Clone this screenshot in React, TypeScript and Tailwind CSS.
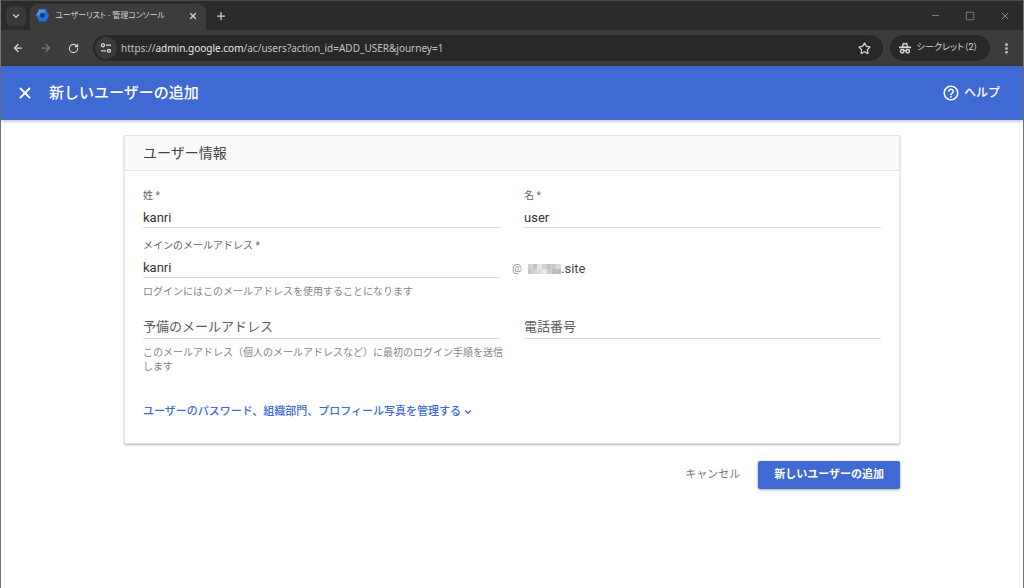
import { useState } from 'react';
import type { ComponentProps } from 'react';
import { ArrowLeft, ArrowRight, ChevronDown, Minus, MoreVertical, Plus, RotateCw, Square, Star, X } from 'lucide-react';

function Favicon() {
  return (
    <svg viewBox="0 0 24 24" className="w-[13px] h-[13px] shrink-0" aria-hidden="true">
      <path d="M6 1h12l6 11-6 11H6L0 12z" fill="#1f6fe5" />
      <path d="M6 1h12l-3 6H9L6 12H0z" fill="#4c94f5" />
      <circle cx="12" cy="12" r="4.500" fill="#2e3440" />
    </svg>
  );
}

function TuneIcon() {
  return (
    <svg viewBox="0 0 12 12" className="w-3 h-3" fill="none" stroke="currentColor" strokeWidth="1.3" aria-hidden="true">
      <circle cx="3" cy="3.2" r="1.5" />
      <path d="M6 3.2h5M1 8.8h5" />
      <circle cx="9" cy="8.8" r="1.5" />
    </svg>
  );
}

function IncognitoIcon() {
  return (
    <svg viewBox="0 0 24 24" className="w-3 h-3" aria-hidden="true">
      <path d="M5.500 9L7.500 2.500Q8 1 9.500 1.500L12 2.300L14.500 1.500Q16 1 16.500 2.500L18.500 9H24V12.500H0V9Z" fill="currentColor" />
      <path d="M9.500 5h5l1 3.500h-7z" fill="#282828" />
      <circle cx="6.500" cy="18.500" r="3.400" fill="none" stroke="currentColor" strokeWidth="3" />
      <circle cx="17.500" cy="18.500" r="3.400" fill="none" stroke="currentColor" strokeWidth="3" />
      <path d="M10 17.500q2-1.500 4 0" fill="none" stroke="currentColor" strokeWidth="2.500" />
    </svg>
  );
}

function HelpIcon() {
  return (
    <svg viewBox="0 0 24 24" className="w-[18px] h-[18px]" fill="currentColor" aria-hidden="true">
      <path d="M11 18h2v-2h-2v2zm1-16C6.480 2 2 6.480 2 12s4.480 10 10 10 10-4.480 10-10S17.520 2 12 2zm0 18c-4.410 0-8-3.590-8-8s3.590-8 8-8 8 3.590 8 8-3.590 8-8 8zm0-14c-2.210 0-4 1.790-4 4h2c0-1.100.9-2 2-2s2 .9 2 2c0 2-3 1.750-3 5h2c0-2.250 3-2.500 3-5 0-2.210-1.790-4-4-4z" />
    </svg>
  );
}

function MaskedDomain() {
  const cells = ['#d2d2d2', '#c4c4c4', '#e6e6e6', '#cfcfcf', '#c4c4c4', '#c9c9c9', '#dadada', '#c6c6c6', '#d0d0d0', '#dddddd', '#e8e8e8', '#cccccc', '#bcbcbc', '#b8b8b8'];
  return (
    <svg viewBox="0 0 35 10" preserveAspectRatio="none" className="w-[33px] h-[10px]" aria-hidden="true">
      {cells.map((fill, i) => (
        <rect key={i} x={(i % 7) * 5} y={i < 7 ? 0 : 5} width="5" height="5" fill={fill} />
      ))}
    </svg>
  );
}

function BrowserChrome() {
  return (
    <div className="bg-[#3c3c3c] text-[#d6d6d6] border-t border-[#4a4a4a]">
      <div className="h-[29px] flex items-stretch bg-[#2b2b2b]">
        <div className="flex items-center pl-[5px] pr-1 shrink-0">
          <button aria-label="タブを検索" className="w-5 h-5 rounded-md bg-[#3a3a3a] flex items-center justify-center">
            <ChevronDown className="w-[10px] h-[10px]" strokeWidth={3} />
          </button>
        </div>
        <div className="w-[176px] mt-[3px] pb-[3px] pl-[6px] pr-2 rounded-t-lg bg-[#3c3c3c] flex items-center gap-[6px]">
          <Favicon />
          <span className="grow whitespace-nowrap text-[8px] [font-feature-settings:'palt']">ユーザーリスト - 管理コンソール</span>
          <button aria-label="タブを閉じる" className="flex">
            <X className="w-[10px] h-[10px]" strokeWidth={3} />
          </button>
        </div>
        <button aria-label="新しいタブ" className="px-[9px]">
          <Plus className="w-3 h-3" strokeWidth={2.500} />
        </button>
        <div className="ml-auto flex items-center gap-6 pr-3 text-[#8a8a8a]">
          <button aria-label="最小化"><Minus className="w-[11px] h-[11px]" strokeWidth={2} /></button>
          <button aria-label="最大化"><Square className="w-[10px] h-[10px]" strokeWidth={2} /></button>
          <button aria-label="閉じる"><X className="w-3 h-3" strokeWidth={2} /></button>
        </div>
      </div>
      <div className="h-9 flex items-center">
        <div className="flex items-center gap-4 pl-[11px] pr-[14px]">
          <button aria-label="戻る"><ArrowLeft className="w-3 h-3" strokeWidth={2.500} /></button>
          <button aria-label="進む" className="text-[#7a7a7a]"><ArrowRight className="w-3 h-3" strokeWidth={2.500} /></button>
          <button aria-label="再読み込み"><RotateCw className="w-[11px] h-[11px]" strokeWidth={2.500} /></button>
        </div>
        <div className="grow h-[26px] rounded-full bg-[#282828] flex items-center pl-[2px] pr-3">
          <button aria-label="サイト情報" className="w-[22px] h-[22px] rounded-full bg-[#3a3a3a] flex items-center justify-center">
            <TuneIcon />
          </button>
          <div className="grow pl-1 text-[10px] font-['Noto_Sans','Open_Sans',sans-serif] text-[#c4c4c4]">
            https://<span className="text-[#ececec]">admin.google.com</span>/ac/users?action_id=ADD_USER&amp;journey=1
          </div>
          <button aria-label="ブックマーク"><Star className="w-[13px] h-[13px]" strokeWidth={2.200} /></button>
        </div>
        <button className="h-[26px] ml-[7px] pl-[9px] pr-3 rounded-full bg-[#282828] flex items-center gap-[6px] text-[9px] whitespace-nowrap">
          <IncognitoIcon />
          <span className="[font-feature-settings:'palt']">シークレット（2）</span>
        </button>
        <button aria-label="メニュー" className="px-[10px]"><MoreVertical className="w-[13px] h-[13px]" strokeWidth={3} /></button>
      </div>
    </div>
  );
}

type FieldProps = ComponentProps<'input'> & { id: string; label: string };

function Field({ id, label, ...rest }: FieldProps) {
  return (
    <div>
      <label htmlFor={id} className="block text-[10px] leading-[14px] text-[#666]">{label} *</label>
      <input
        id={id}
        className="block w-full h-[25px] pt-1 border-b border-[#dcdcdc] text-[13px] text-[#333] font-[Roboto,'Noto_Sans_CJK_JP',sans-serif] outline-none"
        {...rest}
      />
    </div>
  );
}

function PlainField({ label, ...rest }: ComponentProps<'input'> & { label: string }) {
  return (
    <input
      aria-label={label}
      placeholder={label}
      className="block w-full h-[25px] border-b border-[#dcdcdc] text-[13px] text-[#333] placeholder:text-[#5c5c5c] placeholder:opacity-100 outline-none"
      {...rest}
    />
  );
}

export default function App() {
  const [expanded, setExpanded] = useState(false);

  return (
    <div className="min-h-screen bg-white border-x border-[#777] font-[Roboto,'Noto_Sans_CJK_JP',sans-serif]">
      <BrowserChrome />

      <header className="h-[54px] pl-[15px] pr-[23px] flex items-center bg-[#3f6ad4] text-white shadow-[0_1px_4px_rgba(0,0,0,0.3)]">
        <button aria-label="閉じる"><X className="w-[18px] h-[18px]" strokeWidth={2.500} /></button>
        <h1 className="ml-[15px] text-[15px] font-medium">新しいユーザーの追加</h1>
        <button className="ml-auto flex items-center gap-1 text-[12px] font-medium">
          <HelpIcon />
          ヘルプ
        </button>
      </header>

      <main className="max-w-[776px] mx-auto pt-[15px]">
        <section className="bg-white border border-[#e2e2e2] shadow-[0_1px_2px_rgba(0,0,0,0.3)] rounded-xs">
          <h2 className="h-[35px] px-[18px] flex items-center bg-[#fafafa] border-b border-[#e4e4e4] text-[14px] text-[#444]">ユーザー情報</h2>
          <form className="px-[18px] pt-[18px] pb-6">
            <div className="grid grid-cols-2 gap-x-6">
              <Field id="last-name" label="姓" defaultValue="kanri" />
              <Field id="first-name" label="名" defaultValue="user" />
            </div>
            <div className="grid grid-cols-2 gap-x-6 mt-[11px]">
              <div>
                <Field id="primary-email" label="メインのメールアドレス" defaultValue="kanri" />
                <p className="mt-[7px] text-[10px] leading-[14px] text-[#858585]">ログインにはこのメールアドレスを使用することになります</p>
              </div>
              <div className="-ml-3 pt-5 flex items-start leading-5">
                <span className="w-4 text-[11px] text-[#999]">@</span>
                <span className="flex items-center text-[13px] text-[#444]">
                  <MaskedDomain />.site
                </span>
              </div>
            </div>
            <div className="grid grid-cols-2 gap-x-6 mt-[15px]">
              <div>
                <PlainField type="email" label="予備のメールアドレス" />
                <p className="mt-[7px] text-[10px] leading-[14px] text-[#858585] whitespace-nowrap">
                  このメールアドレス（個人のメールアドレスなど）に最初のログイン手順を送信
                  <br />
                  します
                </p>
              </div>
              <PlainField type="tel" label="電話番号" />
            </div>
            <button
              type="button"
              aria-expanded={expanded}
              onClick={() => setExpanded(!expanded)}
              className="mt-[31px] flex items-center gap-[2px] text-[11px] leading-[14px] font-medium text-[#3f6ad4]"
            >
              ユーザーのパスワード、組織部門、プロフィール写真を管理する
              <ChevronDown className="w-[10px] h-[10px]" strokeWidth={3} />
            </button>
          </form>
        </section>

        <div className="mt-[17px] flex justify-end items-center gap-[18px] text-[11px]">
          <button className="text-[#777]">キャンセル</button>
          <button className="h-7 px-4 rounded-xs bg-[#3f6ad4] text-white font-bold shadow-[0_1px_3px_rgba(0,0,0,0.35)]">新しいユーザーの追加</button>
        </div>
      </main>
    </div>
  );
}
